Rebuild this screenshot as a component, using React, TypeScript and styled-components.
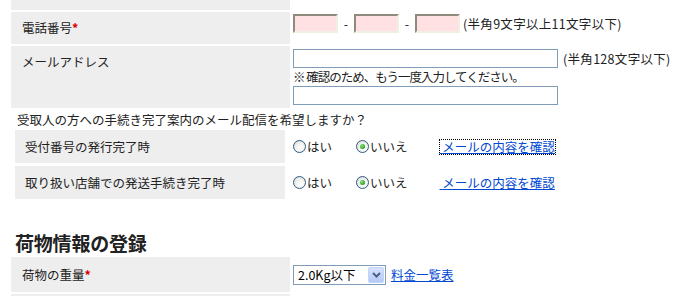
import styled, { createGlobalStyle } from "styled-components";

const GlobalStyle = createGlobalStyle`
  body {
    margin: 0;
    background: #ffffff;
    font-family: "Noto Sans CJK JP", "Noto Sans", sans-serif;
    font-size: 12.5px;
    color: #222222;
  }
`;

const Page = styled.div`
  width: 689px;
  height: 296px;
  overflow: hidden;
  display: flex;
  flex-direction: column;
`;

type TableProps = {
  $left: number,
  $label: number,
  $gap: number,
  $inset: number,
}

const FormTable = styled.div<TableProps>`
  display: grid;
  grid-template-columns: ${(p) => p.$label}px 1fr;
  column-gap: ${(p) => p.$inset}px;
  row-gap: ${(p) => p.$gap}px;
  margin-left: ${(p) => p.$left}px;
`;

type LabelProps = {
  $height?: number,
  $center?: boolean,
  $pad?: number,
}

const Label = styled.div<LabelProps>`
  background: #eeeeee;
  height: ${(p) => (p.$height ? `${p.$height}px` : "auto")};
  box-sizing: border-box;
  padding: ${(p) => (p.$center ? `0 0 0 ${p.$pad ?? 10}px` : "9px 0 0 11px")};
  display: flex;
  align-items: ${(p) => (p.$center ? "center" : "flex-start")};
  line-height: 14px;
`;

const Required = styled.span`
  color: #dd0000;
  font-weight: bold;
`;

type CellProps = {
  $center?: boolean,
  $top?: number,
}

const Cell = styled.div<CellProps>`
  display: flex;
  flex-direction: column;
  align-items: flex-start;
  justify-content: ${(p) => (p.$center ? "center" : "flex-start")};
  padding-top: ${(p) => (p.$center ? 0 : p.$top ?? 2)}px;
`;

const Line = styled.div`
  display: flex;
  align-items: center;
`;

const PhoneInput = styled.input`
  width: 45px;
  height: 19px;
  box-sizing: border-box;
  background: #ffe1e4;
  border: 2px solid;
  border-color: #8e8a7c #f1efe2 #f1efe2 #8e8a7c;
  padding: 0;
  margin: 0;
`;

const Dash = styled.span`
  width: 16px;
  text-align: center;
`;

const Hint = styled.span`
  margin-left: ${(p: { $gap: number }) => p.$gap}px;
  letter-spacing: 0.3px;
`;

const MailInput = styled.input`
  width: 265px;
  height: 19px;
  box-sizing: border-box;
  border: 1px solid #7f9db9;
  background: #ffffff;
  padding: 0;
  margin: 0;
`;

const Note = styled.div`
  line-height: 14px;
  margin: 2px 0 2px;
  letter-spacing: -1px;
`;

const Question = styled.div`
  margin: 4px 0 2px 17px;
  line-height: 16px;
`;

const RadioGroup = styled.label`
  display: flex;
  align-items: center;
  margin-right: ${(p: { $space: number }) => p.$space}px;
`;

const Radio = styled.input`
  appearance: none;
  width: 13px;
  height: 13px;
  margin: 0 1px 0 0;
  border-radius: 50%;
  border: 1px solid #2c5a86;
  box-sizing: border-box;
  background: radial-gradient(circle at 60% 65%, #ffffff 0%, #f2f2ef 45%, #d4d4cc 100%);
  display: grid;
  place-items: center;

  &:checked::after {
    content: "";
    width: 5px;
    height: 5px;
    border-radius: 50%;
    background: radial-gradient(circle at 35% 35%, #8ee27d 0%, #27a326 70%, #1a8a1a 100%);
  }
`;

const Link = styled.a<{ $focus?: boolean }>`
  color: #0047d1;
  text-decoration: underline;
  line-height: 14px;
  outline: ${(p) => (p.$focus ? "1px dotted #000000" : "none")};
  outline-offset: 0;
  cursor: pointer;
`;

const Heading = styled.h2`
  margin: 32px 0 2px 15px;
  font-size: 19px;
  line-height: 24px;
  font-weight: bold;
  color: #222222;
  letter-spacing: -0.2px;
`;

const Select = styled.div`
  width: 93px;
  height: 20px;
  box-sizing: border-box;
  border: 1px solid #7f9db9;
  background: #ffffff;
  display: flex;
  align-items: center;
  justify-content: space-between;
  padding: 1px;
  margin-right: 5px;
`;

const SelectValue = styled.span`
  padding-left: 3px;
  color: #000000;
  line-height: 16px;
`;

const SelectButton = styled.span`
  width: 16px;
  height: 16px;
  box-sizing: border-box;
  border: 1px solid #c3d3fd;
  border-radius: 2px;
  background: linear-gradient(#d6e3fe, #b5c9f7);
  display: grid;
  place-items: center;
`;

function Chevron() {
  return (
    <svg width="9" height="6" viewBox="0 0 9 6">
      <path d="M1 1 L4.5 4.5 L8 1" fill="none" stroke="#4d6185" strokeWidth="2" />
    </svg>
  );
}

function NoticeRow({ label, focus }: { label: string, focus?: boolean }) {
  return (
    <>
      <Label $height={33} $center>{label}</Label>
      <Cell $center>
        <Line>
          <RadioGroup $space={24}>
            <Radio type="radio" name={label} />はい
          </RadioGroup>
          <RadioGroup $space={32}>
            <Radio type="radio" name={label} defaultChecked />いいえ
          </RadioGroup>
          <Link $focus={focus}>{"\u00a0"}メールの内容を確認</Link>
        </Line>
      </Cell>
    </>
  );
}

export default function App() {
  return (
    <Page>
      <GlobalStyle />
      <FormTable $left={11} $label={279} $gap={2} $inset={3}>
        <Label $height={10} />
        <Cell />

        <Label $height={32}>
          電話番号<Required>*</Required>
        </Label>
        <Cell>
          <Line>
            <PhoneInput />
            <Dash>-</Dash>
            <PhoneInput />
            <Dash>-</Dash>
            <PhoneInput />
            <Hint $gap={3}>(半角9文字以上11文字以下)</Hint>
          </Line>
        </Cell>

        <Label $height={62}>メールアドレス</Label>
        <Cell $top={3}>
          <Line>
            <MailInput />
            <Hint $gap={5}>(半角128文字以下)</Hint>
          </Line>
          <Note>※ 確認のため、もう一度入力してください。</Note>
          <MailInput />
        </Cell>
      </FormTable>

      <Question>受取人の方への手続き完了案内のメール配信を希望しますか？</Question>

      <FormTable $left={15} $label={270} $gap={3} $inset={8}>
        <NoticeRow label="受付番号の発行完了時" focus />
        <NoticeRow label="取り扱い店舗での発送手続き完了時" />
      </FormTable>

      <Heading>荷物情報の登録</Heading>

      <FormTable $left={11} $label={279} $gap={2} $inset={3}>
        <Label $height={35} $center $pad={11}>
          荷物の重量<Required>*</Required>
        </Label>
        <Cell $center>
          <Line>
            <Select>
              <SelectValue>2.0Kg以下</SelectValue>
              <SelectButton>
                <Chevron />
              </SelectButton>
            </Select>
            <Link>料金一覧表</Link>
          </Line>
        </Cell>

        <Label $height={20} />
        <Cell />
      </FormTable>
    </Page>
  );
}
